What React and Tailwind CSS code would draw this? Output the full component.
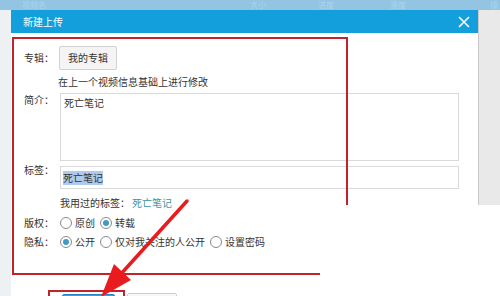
function Radio({ checked, label }) {
  return (
    <label className="flex items-center gap-[3px] mr-[5px]">
      <span className="w-[12px] h-[12px] rounded-full border border-[#8a8a8a] bg-white flex items-center justify-center">
        {checked && <span className="w-[6px] h-[6px] rounded-full bg-[#3d9cc6]" />}
      </span>
      <span>{label}</span>
    </label>
  );
}

function Label({ children, className = "" }) {
  return <div className={"w-[36px] shrink-0 " + className}>{children}</div>;
}

export default function App() {
  return (
    <div
      className="relative w-[500px] h-[296px] overflow-hidden bg-[#eef1f3] text-[10px] leading-[14px] text-[#333]"
      style={{ fontFamily: '"Noto Sans CJK SC", "Noto Sans", sans-serif' }}
    >
      {/* page behind the dialog */}
      <div className="h-[10px] bg-[#93c5e3] flex items-start text-[8px] leading-[10px] text-[#acd3ea] overflow-hidden">
        <span className="ml-[22px]">视频名</span>
        <span className="ml-[204px]">大小</span>
        <span className="ml-[52px]">进度</span>
        <span className="ml-[56px]">速度</span>
        <span className="ml-[84px]">操</span>
      </div>

      <div className="flex">
        <div className="w-[11px] shrink-0" />
        <div className="w-[467px] shrink-0 bg-white flex flex-col">
          <div className="h-[23px] shrink-0 bg-[#129fdc] flex items-center justify-between pl-[12px] pr-[8px] text-white">
            <span className="text-[10px]">新建上传</span>
            <svg width="12" height="12" viewBox="0 0 12 12">
              <path d="M1 1 L11 11 M11 1 L1 11" stroke="white" strokeWidth="1.6" />
            </svg>
          </div>

          <div className="flex flex-col pl-[13px] pt-[13px]">
            <div className="flex items-center h-[24px]">
              <Label>专辑：</Label>
              <button className="h-[24px] px-[8px] -ml-px bg-[#f4f4f4] border border-[#d2d2d2] rounded-[2px] text-[10px] text-[#333]">
                我的专辑
              </button>
            </div>

            <div className="mt-[5px] pl-[34px]">在上一个视频信息基础上进行修改</div>

            <div className="flex items-start mt-[4px]">
              <Label>简介：</Label>
              <div className="w-[399px] h-[68px] border border-[#dadada] px-[3px] pt-[2px]">死亡笔记</div>
            </div>

            <div className="flex items-start mt-[5px]">
              <Label className="-mt-[3px]">标签：</Label>
              <div className="w-[399px] h-[23px] border border-[#dadada] px-[2px] flex items-center">
                <span className="bg-[#aecbee] leading-[14px]">死亡笔记</span>
              </div>
            </div>

            <div className="mt-[7px] pl-[36px] flex">
              <span>我用过的标签：</span>
              <span className="text-[#3a95a8] ml-[2px]">死亡笔记</span>
            </div>

            <div className="flex items-center h-[16px] mt-[5px]">
              <Label>版权：</Label>
              <Radio label="原创" />
              <Radio checked label="转载" />
            </div>

            <div className="flex items-center h-[16px] mt-[3px]">
              <Label>隐私：</Label>
              <Radio checked label="公开" />
              <Radio label="仅对我关注的人公开" />
              <Radio label="设置密码" />
            </div>

            <div className="flex items-start mt-[43px] pl-[38px] gap-[12px]">
              <div className="w-[53px] h-[20px] mt-px bg-[#3f9bd9] border border-[#2b82c2] rounded-[2px]" />
              <div className="w-[50px] h-[20px] bg-[#f7f7f7] border border-[#cfcfcf] rounded-[2px]" />
            </div>
          </div>
        </div>
        <div className="flex-1 bg-[#e9e9e9] border-l border-[#c9c9c9]" />
      </div>

      {/* annotations */}
      <div className="absolute left-[12px] top-[37px] w-[336px] h-[238px] border-2 border-[#c0242a] pointer-events-none" />
      <div className="absolute left-[48px] top-[290px] w-[77px] h-[20px] border-2 border-[#c0242a] pointer-events-none" />
      <div className="absolute left-[320px] top-[205px] right-0 bottom-0 bg-white" />
      <svg className="absolute left-0 top-0 pointer-events-none" width="500" height="296" viewBox="0 0 500 296">
        <line x1="187" y1="201" x2="120" y2="275" stroke="#e81c1e" strokeWidth="3.5" strokeLinecap="round" />
        <polygon points="101,297 114,264 131,280" fill="#e81c1e" />
      </svg>
    </div>
  );
}
